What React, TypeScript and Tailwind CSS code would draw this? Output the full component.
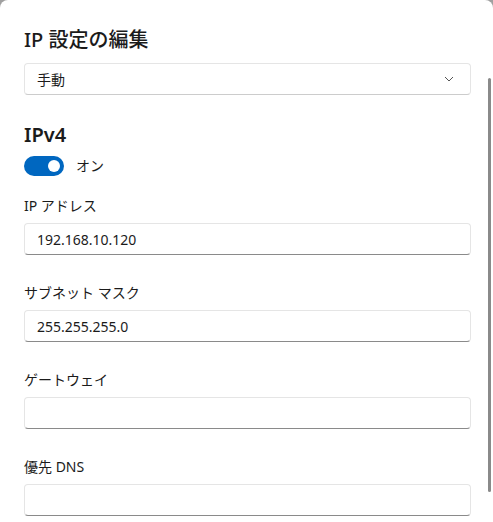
const FONT = {
  fontFamily: '"Segoe UI", "Noto Sans", "Noto Sans CJK JP", sans-serif',
};

function Field({ label, value }: { label: string; value?: string }) {
  return (
    <div className="flex flex-col">
      <div className="h-5 text-[14px] leading-5 text-[#1b1b1b]">{label}</div>
      <div className="mt-[7px] h-[32px] rounded-[4px] border border-[#e5e5e5] border-b-[#8a8a8a] bg-white px-3 flex items-center text-[14px] text-[#1b1b1b]">
        {value}
      </div>
    </div>
  );
}

export default function App() {
  return (
    <div className="w-[493px] h-[522px] bg-[#a0a0a0] overflow-hidden" style={FONT}>
      <div className="relative w-full h-full bg-white rounded-t-[8px] pl-6 pr-[22px] pt-[26px]">
        {/* scrollbar */}
        <div className="absolute right-[2px] top-[78px] h-[414px] w-[3px] rounded-full bg-[#8a8a8a]" />

        <h1 className="h-[28px] text-[20px] leading-[28px] font-medium text-[#1b1b1b]">
          IP 設定の編集
        </h1>

        <div className="mt-[9px] h-[32px] rounded-[4px] border border-[#e5e5e5] border-b-[#cccccc] bg-white pl-3 pr-4 flex items-center justify-between text-[14px] text-[#1b1b1b]">
          <span>手動</span>
          <svg width="10" height="6" viewBox="0 0 10 6" fill="none">
            <path d="M1 1l4 4 4-4" stroke="#555" strokeWidth="1" />
          </svg>
        </div>

        <h2 className="mt-[28px] h-[24px] text-[20px] leading-[24px] font-semibold text-[#1b1b1b]">
          IPv4
        </h2>

        <div className="mt-[8px] flex items-center gap-3">
          <div className="w-[40px] h-[20px] rounded-full bg-[#0067c0] flex items-center justify-end pr-[4px]">
            <div className="w-[12px] h-[12px] rounded-full bg-white" />
          </div>
          <span className="text-[14px] text-[#1b1b1b]">オン</span>
        </div>

        <div className="mt-[20px] flex flex-col gap-[28px]">
          <Field label="IP アドレス" value="192.168.10.120" />
          <Field label="サブネット マスク" value="255.255.255.0" />
          <Field label="ゲートウェイ" />
          <Field label="優先 DNS" />
        </div>
      </div>
    </div>
  );
}
